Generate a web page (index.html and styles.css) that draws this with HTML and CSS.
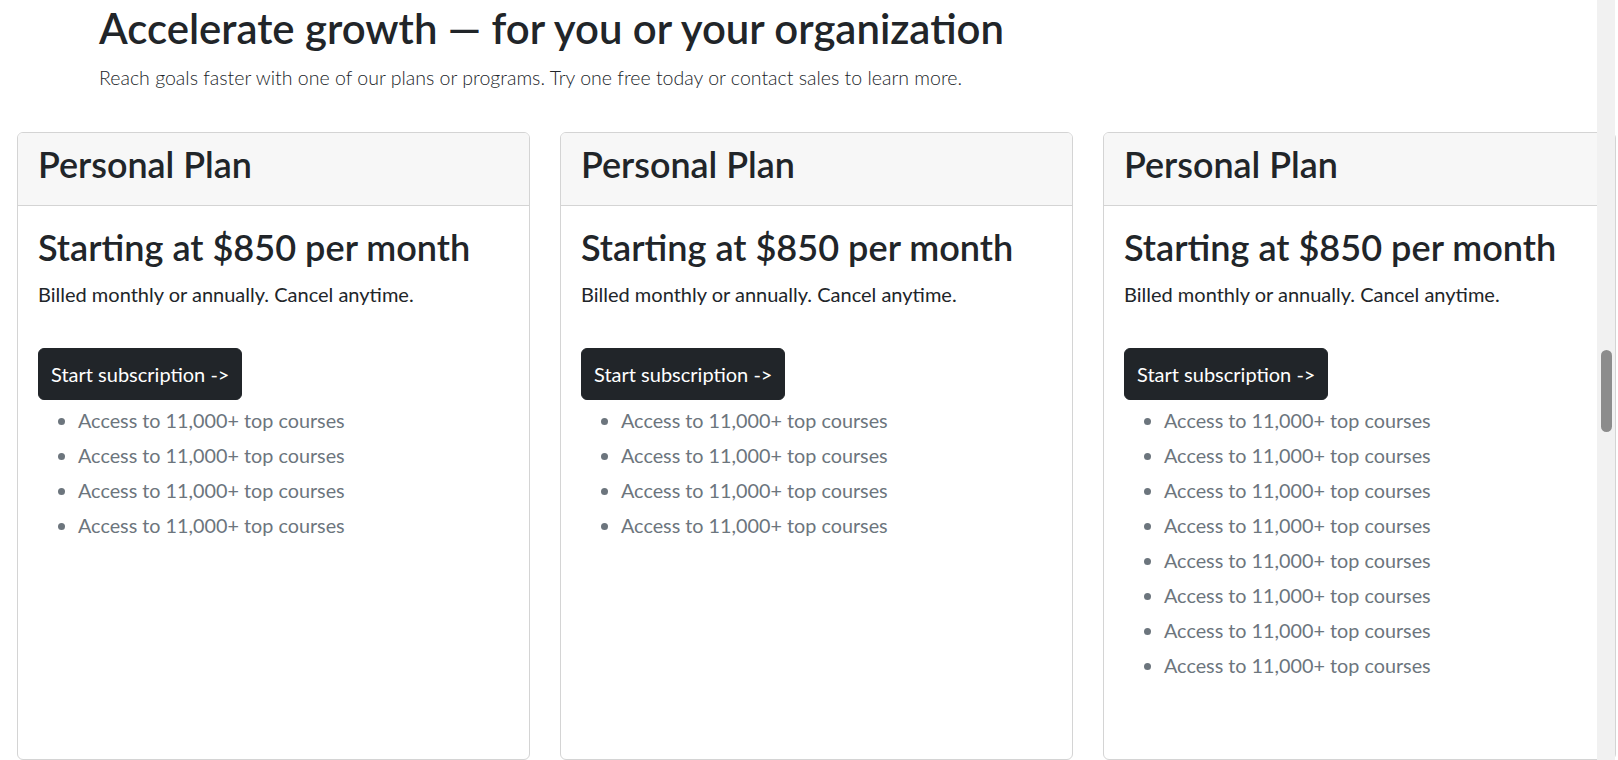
FILE: index.html
```html
<!DOCTYPE html>
<html lang="en">
<head>
<meta charset="utf-8">
<title>Plans</title>
<link rel="stylesheet" href="styles.css">
</head>
<body>
<header class="intro">
  <h1 class="intro-title">Accelerate growth — for you or your organization</h1>
  <p class="intro-lead">Reach goals faster with one of our plans or programs. Try one free today or contact sales to learn more.</p>
</header>
<main class="plans">
  <section class="card">
    <div class="card-header"><h2 class="card-heading">Personal Plan</h2></div>
    <div class="card-body">
      <h3 class="card-title">Starting at $850 per month</h3>
      <p class="card-text">Billed monthly or annually. Cancel anytime.</p>
      <button class="btn" type="button">Start subscription -&gt;</button>
      <ul class="features">
        <li>Access to 11,000+ top courses</li>
        <li>Access to 11,000+ top courses</li>
        <li>Access to 11,000+ top courses</li>
        <li>Access to 11,000+ top courses</li>
      </ul>
    </div>
  </section>
  <section class="card">
    <div class="card-header"><h2 class="card-heading">Personal Plan</h2></div>
    <div class="card-body">
      <h3 class="card-title">Starting at $850 per month</h3>
      <p class="card-text">Billed monthly or annually. Cancel anytime.</p>
      <button class="btn" type="button">Start subscription -&gt;</button>
      <ul class="features">
        <li>Access to 11,000+ top courses</li>
        <li>Access to 11,000+ top courses</li>
        <li>Access to 11,000+ top courses</li>
        <li>Access to 11,000+ top courses</li>
      </ul>
    </div>
  </section>
  <section class="card">
    <div class="card-header"><h2 class="card-heading">Personal Plan</h2></div>
    <div class="card-body">
      <h3 class="card-title">Starting at $850 per month</h3>
      <p class="card-text">Billed monthly or annually. Cancel anytime.</p>
      <button class="btn" type="button">Start subscription -&gt;</button>
      <ul class="features">
        <li>Access to 11,000+ top courses</li>
        <li>Access to 11,000+ top courses</li>
        <li>Access to 11,000+ top courses</li>
        <li>Access to 11,000+ top courses</li>
        <li>Access to 11,000+ top courses</li>
        <li>Access to 11,000+ top courses</li>
        <li>Access to 11,000+ top courses</li>
        <li>Access to 11,000+ top courses</li>
      </ul>
    </div>
  </section>
</main>
<div class="scrollbar" aria-hidden="true"><div class="scrollbar-thumb"></div></div>
</body>
</html>
```
FILE: styles.css
```css
* {
  box-sizing: border-box;
}
html,
body {
  overflow-x: hidden;
}
body {
  margin: 0;
  font-family: Lato, "Liberation Sans", sans-serif;
  color: #212529;
  background: #fff;
}
.intro {
  padding: 3px 0 0 99px;
}
.intro-title {
  margin: 0 0 10px;
  font-size: 41.9px;
  font-weight: 600;
  line-height: 50px;
}
.intro-lead {
  margin: 0;
  font-size: 19.55px;
  font-weight: 300;
  line-height: 1.5;
}
.plans {
  display: flex;
  gap: 30px;
  padding: 40px 0 2px 17px;
}
.card {
  flex: 0 0 513px;
  width: 513px;
  min-height: 628px;
  border: 1px solid #d4d4d4;
  border-radius: 6px;
  background: #fff;
  display: flex;
  flex-direction: column;
}
.card-header {
  background: #f7f7f7;
  border-bottom: 1px solid #d4d4d4;
  border-radius: 5px 5px 0 0;
  padding: 10px 20px 19px;
}
.card-heading {
  margin: 0;
  font-size: 35.9px;
  font-weight: 600;
  line-height: 43px;
}
.card-body {
  padding: 20px;
  flex: 1;
}
.card-title {
  margin: 0 0 10px;
  font-size: 36.1px;
  font-weight: 600;
  line-height: 43px;
}
.card-text {
  margin: 0 0 39px;
  font-size: 20px;
  line-height: 30px;
}
.btn {
  display: inline-block;
  font-family: inherit;
  font-size: 20px;
  line-height: 28px;
  padding: 11px 12px;
  color: #fff;
  background: #212529;
  border: 1px solid #212529;
  border-radius: 6px;
  cursor: pointer;
}
.features {
  margin: 3px 0 0;
  padding-left: 40px;
  color: #6c757d;
  font-size: 19.8px;
  line-height: 35px;
}
/* browser scrollbar shown in the capture */
.scrollbar {
  position: fixed;
  top: 0;
  right: 3px;
  width: 18px;
  height: 100vh;
  background: #f1f1f1;
}
.scrollbar-thumb {
  position: absolute;
  top: 350px;
  left: 4px;
  width: 11px;
  height: 82px;
  border-radius: 6px;
  background: #8c8c8c;
}
```
